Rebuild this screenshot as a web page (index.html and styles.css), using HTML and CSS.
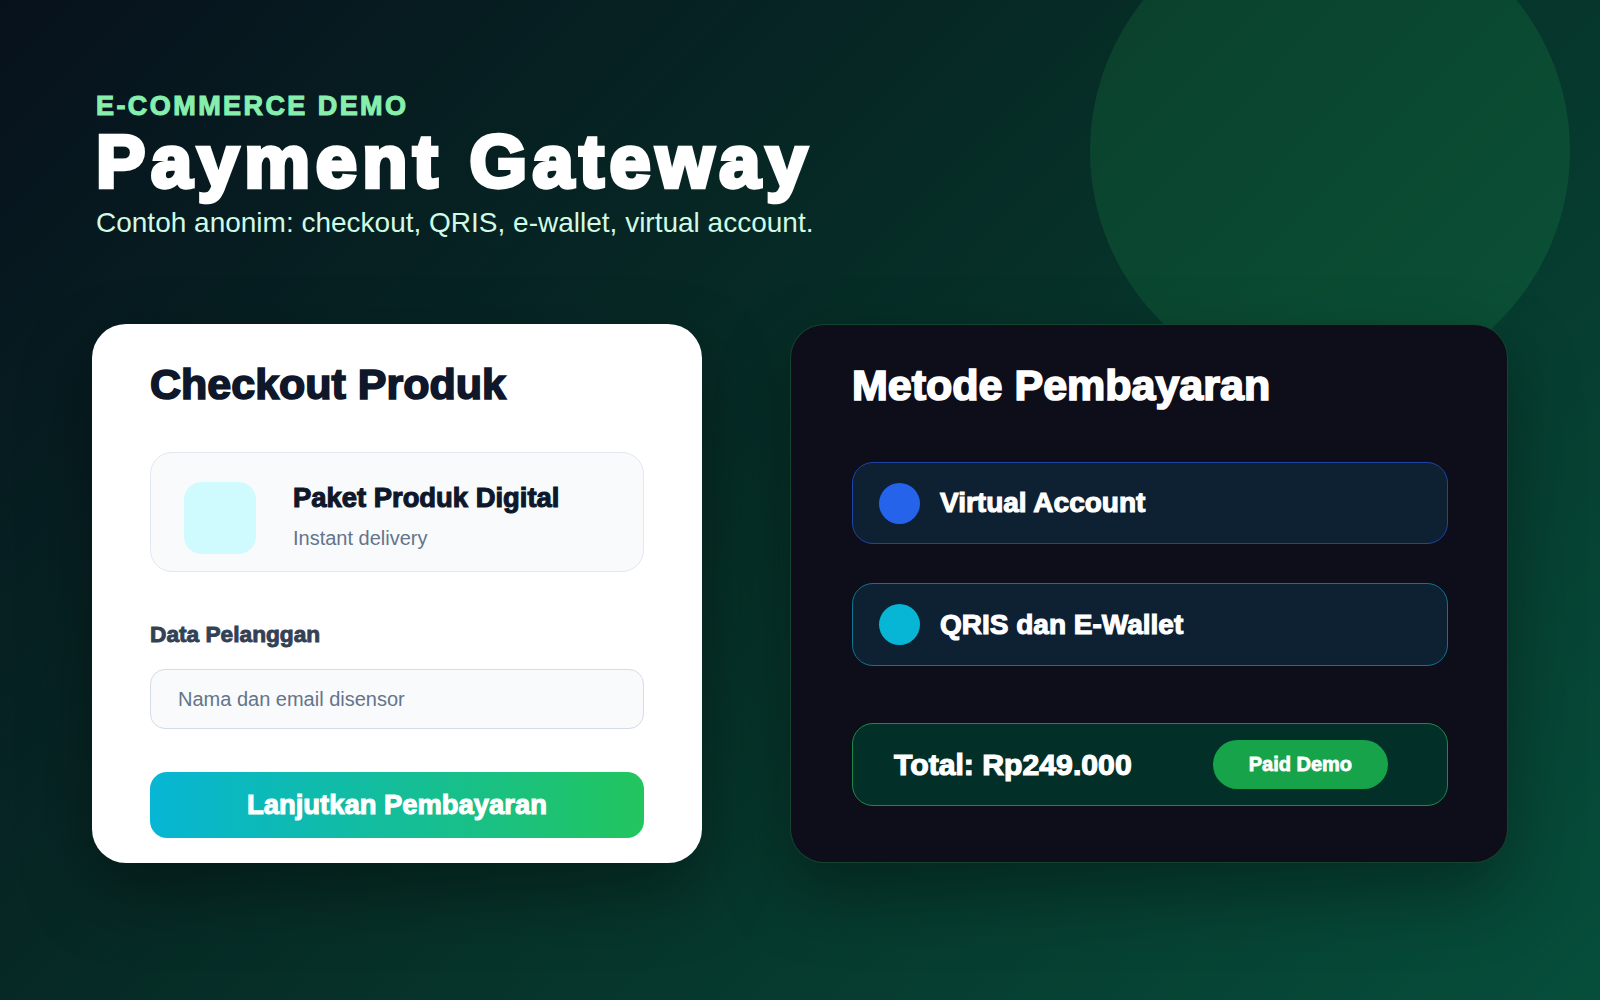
FILE: index.html
```html
<!DOCTYPE html>
<html lang="id">
<head>
<meta charset="utf-8">
<title>Payment Gateway</title>
<link rel="stylesheet" href="styles.css">
</head>
<body>
<div class="page">
  <div class="orb"></div>
  <header class="hero">
    <div class="eyebrow heavy">E-COMMERCE DEMO</div>
    <h1 class="title">Payment Gateway</h1>
    <p class="subtitle">Contoh anonim: checkout, QRIS, e-wallet, virtual account.</p>
  </header>
  <main class="grid">
    <section class="card card-light">
      <h2 class="card-title heavy">Checkout Produk</h2>
      <div class="product">
        <div class="thumb"></div>
        <div class="product-info">
          <div class="product-name heavy">Paket Produk Digital</div>
          <div class="product-meta">Instant delivery</div>
        </div>
      </div>
      <label class="field-label heavy">Data Pelanggan</label>
      <div class="input">Nama dan email disensor</div>
      <button class="cta heavy">Lanjutkan Pembayaran</button>
    </section>
    <section class="card card-dark">
      <h2 class="card-title heavy">Metode Pembayaran</h2>
      <div class="method method-va">
        <span class="dot dot-blue"></span>
        <span class="method-name heavy">Virtual Account</span>
      </div>
      <div class="method method-qris">
        <span class="dot dot-cyan"></span>
        <span class="method-name heavy">QRIS dan E-Wallet</span>
      </div>
      <div class="total">
        <span class="total-text heavy">Total: Rp249.000</span>
        <span class="badge heavy">Paid Demo</span>
      </div>
    </section>
  </main>
</div>
</body>
</html>
```
FILE: styles.css
```css
* { box-sizing: border-box; }
html, body { margin: 0; padding: 0; }
body {
  width: 1600px;
  height: 1000px;
  overflow: hidden;
  font-family: "Liberation Sans", Arial, sans-serif;
  background: linear-gradient(135deg, #07111c 0%, #063028 50%, #064e3b 100%);
}
.heavy {
  font-weight: 900;
  -webkit-text-stroke: 0.04em currentColor;
}
.page {
  position: relative;
  width: 1600px;
  height: 1000px;
  padding: 93px 92px 0 92px;
}
.orb {
  position: absolute;
  left: 1090px;
  top: -89px;
  width: 480px;
  height: 480px;
  border-radius: 50%;
  background: rgba(34, 197, 94, 0.14);
}
.hero { position: relative; padding-left: 4px; }
.eyebrow {
  font-size: 27px;
  line-height: 26px;
  letter-spacing: 0.09em;
  color: #86efac;
}
.title {
  margin: 6px 0 0 0;
  font-size: 74px;
  line-height: 74px;
  font-weight: 900;
  letter-spacing: 0.075em;
  -webkit-text-stroke: 0.058em currentColor;
  color: #ffffff;
}
.subtitle {
  margin: 7px 0 0 0;
  font-size: 28px;
  line-height: 34px;
  color: #d1fae5;
}
.grid {
  position: relative;
  display: grid;
  grid-template-columns: 610px 718px;
  column-gap: 88px;
  margin-top: 84px;
}
.card {
  border-radius: 34px;
  box-shadow: 0 30px 70px rgba(0, 0, 0, 0.35);
  display: flex;
  flex-direction: column;
}
.card-title {
  margin: 0;
  font-size: 43px;
  line-height: 47px;
}
.card-light {
  background: #ffffff;
  padding: 37px 58px 25px 58px;
}
.card-light .card-title { color: #0f172a; }
.product {
  margin-top: 44px;
  display: flex;
  align-items: flex-start;
  gap: 37px;
  height: 120px;
  padding: 29px 33px 0 33px;
  background: #f8fafc;
  border: 1px solid #e2e8f0;
  border-radius: 22px;
}
.thumb {
  width: 72px;
  height: 72px;
  border-radius: 18px;
  background: #cffafe;
  flex: none;
}
.product-info { display: flex; flex-direction: column; }
.product-name {
  font-size: 27.4px;
  line-height: 32px;
  color: #0f172a;
}
.product-meta {
  margin-top: 12px;
  font-size: 20px;
  line-height: 24px;
  color: #64748b;
}
.field-label {
  margin-top: 49px;
  font-size: 22.7px;
  line-height: 27px;
  color: #334155;
}
.input {
  margin-top: 21px;
  height: 60px;
  display: flex;
  align-items: center;
  padding: 0 27px;
  background: #f8fafc;
  border: 1px solid #d5dce6;
  border-radius: 15px;
  font-size: 20px;
  color: #64748b;
}
.cta {
  margin-top: 43px;
  height: 66px;
  border: none;
  border-radius: 17px;
  background: linear-gradient(90deg, #06b6d4 0%, #22c55e 100%);
  color: #ffffff;
  font-family: "Liberation Sans", Arial, sans-serif;
  font-size: 27.4px;
  padding: 0;
}
.card-dark {
  background: #0e0e1b;
  border: 1px solid rgba(34, 197, 94, 0.3);
  padding: 37px 59px 56px 61px;
}
.card-dark .card-title { color: #ffffff; }
.method {
  display: flex;
  align-items: center;
  gap: 20px;
  height: 82px;
  padding: 0 26px;
  background: #0e2133;
  border-radius: 21px;
}
.method-va { margin-top: 53px; border: 1px solid #1e44a8; }
.method-qris { margin-top: 39px; height: 83px; border: 1px solid #0e7490; }
.dot {
  width: 41px;
  height: 41px;
  border-radius: 50%;
  flex: none;
}
.dot-blue { background: #2563eb; }
.dot-cyan { background: #06b6d4; }
.method-name {
  font-size: 28px;
  color: #ffffff;
}
.total {
  margin-top: 57px;
  height: 83px;
  display: flex;
  align-items: center;
  gap: 81px;
  padding: 0 41px;
  background: #023028;
  border: 1px solid #1c8a48;
  border-radius: 21px;
}
.total-text {
  font-size: 30.2px;
  color: #ffffff;
}
.badge {
  height: 49px;
  padding: 0 36px;
  display: flex;
  align-items: center;
  border-radius: 25px;
  background: #16a34a;
  color: #ffffff;
  font-size: 20px;
}
```
